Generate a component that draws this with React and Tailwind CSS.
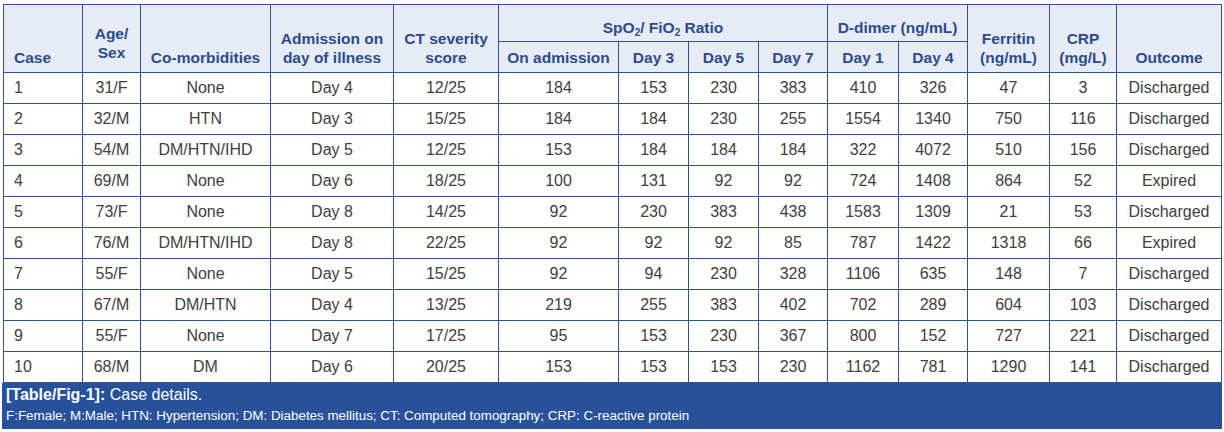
import React from 'react';

const rows = [
  ['1', '31/F', 'None', 'Day 4', '12/25', '184', '153', '230', '383', '410', '326', '47', '3', 'Discharged'],
  ['2', '32/M', 'HTN', 'Day 3', '15/25', '184', '184', '230', '255', '1554', '1340', '750', '116', 'Discharged'],
  ['3', '54/M', 'DM/HTN/IHD', 'Day 5', '12/25', '153', '184', '184', '184', '322', '4072', '510', '156', 'Discharged'],
  ['4', '69/M', 'None', 'Day 6', '18/25', '100', '131', '92', '92', '724', '1408', '864', '52', 'Expired'],
  ['5', '73/F', 'None', 'Day 8', '14/25', '92', '230', '383', '438', '1583', '1309', '21', '53', 'Discharged'],
  ['6', '76/M', 'DM/HTN/IHD', 'Day 8', '22/25', '92', '92', '92', '85', '787', '1422', '1318', '66', 'Expired'],
  ['7', '55/F', 'None', 'Day 5', '15/25', '92', '94', '230', '328', '1106', '635', '148', '7', 'Discharged'],
  ['8', '67/M', 'DM/HTN', 'Day 4', '13/25', '219', '255', '383', '402', '702', '289', '604', '103', 'Discharged'],
  ['9', '55/F', 'None', 'Day 7', '17/25', '95', '153', '230', '367', '800', '152', '727', '221', 'Discharged'],
  ['10', '68/M', 'DM', 'Day 6', '20/25', '153', '153', '153', '230', '1162', '781', '1290', '141', 'Discharged'],
];

const widths = [79, 58, 130, 123, 105, 120, 70, 70, 69, 71, 69, 82, 67, 105];

const th = 'border border-[#2f5294] bg-[#e7ebf5] text-[#2a4b8d] font-semibold text-[15.5px] leading-[19px] px-1';
const td = 'border border-[#2f5294] h-[31px] text-[16px] text-[#404040] text-center px-1';

export default function App() {
  return (
    <div className="bg-white w-[1224px] h-[432px] pt-[4px] pl-[2px]" style={{ fontFamily: '"Liberation Sans", Arial, sans-serif' }}>
      <div className="w-[1220px]">
        <table className="table-fixed border-collapse w-[1219px] ml-[1px]">
          <colgroup>
            {widths.map((w, i) => (
              <col key={i} style={{ width: w }} />
            ))}
          </colgroup>
          <thead>
            <tr className="h-[37px]">
              <th rowSpan={2} className={`${th} align-bottom text-left pl-[10px] pb-[5px]`}>Case</th>
              <th rowSpan={2} className={`${th} align-bottom pb-[10px]`}>Age/<br />Sex</th>
              <th rowSpan={2} className={`${th} align-bottom pb-[5px]`}>Co-morbidities</th>
              <th rowSpan={2} className={`${th} align-bottom pb-[5px]`}>Admission on<br />day of illness</th>
              <th rowSpan={2} className={`${th} align-bottom pb-[5px]`}>CT severity<br />score</th>
              <th colSpan={4} className={`${th} align-bottom pb-[4px]`}>
                SpO<sub className="text-[10px]">2</sub>/ FiO<sub className="text-[10px]">2</sub> Ratio
              </th>
              <th colSpan={2} className={`${th} align-bottom pb-[4px]`}>D-dimer (ng/mL)</th>
              <th rowSpan={2} className={`${th} align-bottom pb-[5px]`}>Ferritin<br />(ng/mL)</th>
              <th rowSpan={2} className={`${th} align-bottom pb-[5px]`}>CRP<br />(mg/L)</th>
              <th rowSpan={2} className={`${th} align-bottom pb-[5px]`}>Outcome</th>
            </tr>
            <tr className="h-[31px]">
              <th className={th}>On admission</th>
              <th className={th}>Day 3</th>
              <th className={th}>Day 5</th>
              <th className={th}>Day 7</th>
              <th className={th}>Day 1</th>
              <th className={th}>Day 4</th>
            </tr>
          </thead>
          <tbody>
            {rows.map((r) => (
              <tr key={r[0]}>
                {r.map((c, i) => (
                  <td key={i} className={i === 0 ? `${td} !text-left pl-[10px]` : td}>
                    {c}
                  </td>
                ))}
              </tr>
            ))}
          </tbody>
        </table>
        <div className="bg-[#27519b] text-white h-[46px] pl-[4px] pt-[2px]">
          <div className="text-[16px] leading-[20px]">
            <span className="font-bold">[Table/Fig-1]:</span> Case details.
          </div>
          <div className="text-[13.4px] leading-[21px]">
            F:Female; M:Male; HTN: Hypertension; DM: Diabetes mellitus; CT: Computed tomography; CRP: C-reactive protein
          </div>
        </div>
      </div>
    </div>
  );
}
